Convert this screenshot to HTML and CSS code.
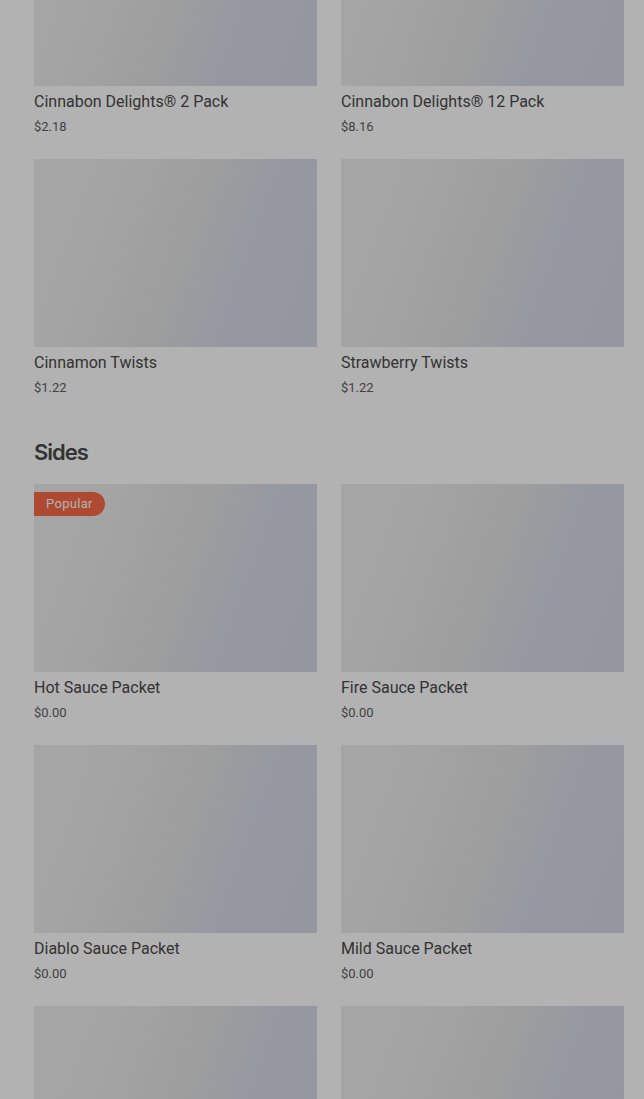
FILE: index.html
```html
<!DOCTYPE html>
<html lang="en">
<head>
    <meta charset="UTF-8">
    <meta name="viewport" content="width=device-width, initial-scale=1.0">
    <title>Menu</title>
    <link rel="stylesheet" href="styles.css">
</head>
<body>
    <main class="menu">
        <section class="category">
            <div class="grid">
                <div class="item">
                    <div class="thumb"></div>
                    <div class="name">Cinnabon Delights® 2 Pack</div>
                    <div class="price">$2.18</div>
                </div>
                <div class="item">
                    <div class="thumb"></div>
                    <div class="name">Cinnabon Delights® 12 Pack</div>
                    <div class="price">$8.16</div>
                </div>
                <div class="item">
                    <div class="thumb"></div>
                    <div class="name">Cinnamon Twists</div>
                    <div class="price">$1.22</div>
                </div>
                <div class="item">
                    <div class="thumb"></div>
                    <div class="name">Strawberry Twists</div>
                    <div class="price">$1.22</div>
                </div>
            </div>
        </section>

        <section class="category">
            <h2>Sides</h2>
            <div class="grid">
                <div class="item">
                    <div class="thumb">
                        <span class="badge">Popular</span>
                    </div>
                    <div class="name">Hot Sauce Packet</div>
                    <div class="price">$0.00</div>
                </div>
                <div class="item">
                    <div class="thumb"></div>
                    <div class="name">Fire Sauce Packet</div>
                    <div class="price">$0.00</div>
                </div>
                <div class="item">
                    <div class="thumb"></div>
                    <div class="name">Diablo Sauce Packet</div>
                    <div class="price">$0.00</div>
                </div>
                <div class="item">
                    <div class="thumb"></div>
                    <div class="name">Mild Sauce Packet</div>
                    <div class="price">$0.00</div>
                </div>
                <div class="item">
                    <div class="thumb"></div>
                </div>
                <div class="item">
                    <div class="thumb"></div>
                </div>
            </div>
        </section>
    </main>

    <div class="backdrop"></div>
</body>
</html>
```

FILE: styles.css
```css
body {
    font-family: Roboto, "Liberation Sans", sans-serif;
    background-color: #fff;
    margin: 0;
    padding: 0;
    height: 100vh;
    overflow: hidden;
}
.menu {
    margin-top: -102px;
    padding: 0 20px 0 34px;
}
.category + .category {
    margin-top: 39px;
}
.category h2 {
    margin: 0 0 16px;
    font-family: Inter, sans-serif;
    font-size: 22px;
    font-weight: 600;
    line-height: 32px;
    letter-spacing: -1px;
    color: #4a4a4a;
}
.grid {
    display: grid;
    grid-template-columns: 1fr 1fr;
    column-gap: 24px;
    row-gap: 23px;
}
.thumb {
    position: relative;
    height: 188px;
    background: linear-gradient(110deg, #ededed 0%, #ebebeb 25%, #e2e2e2 52%, #d6dae6 72%, #d5d9e6 100%);
}
.badge {
    position: absolute;
    top: 8px;
    left: 0;
    padding: 0 12px;
    height: 24px;
    line-height: 24px;
    font-size: 13px;
    letter-spacing: 0.3px;
    color: #fff;
    background-color: #f86a47;
    border-radius: 0 12px 12px 0;
}
.name {
    margin-top: 6px;
    font-size: 16px;
    font-weight: 400;
    line-height: 20px;
    color: #4a4a4a;
}
.price {
    margin-top: 6px;
    font-size: 13px;
    line-height: 18px;
    color: #5e5e5e;
}
.backdrop {
    position: fixed;
    inset: 0;
    background-color: rgba(0, 0, 0, 0.3);
}
```
